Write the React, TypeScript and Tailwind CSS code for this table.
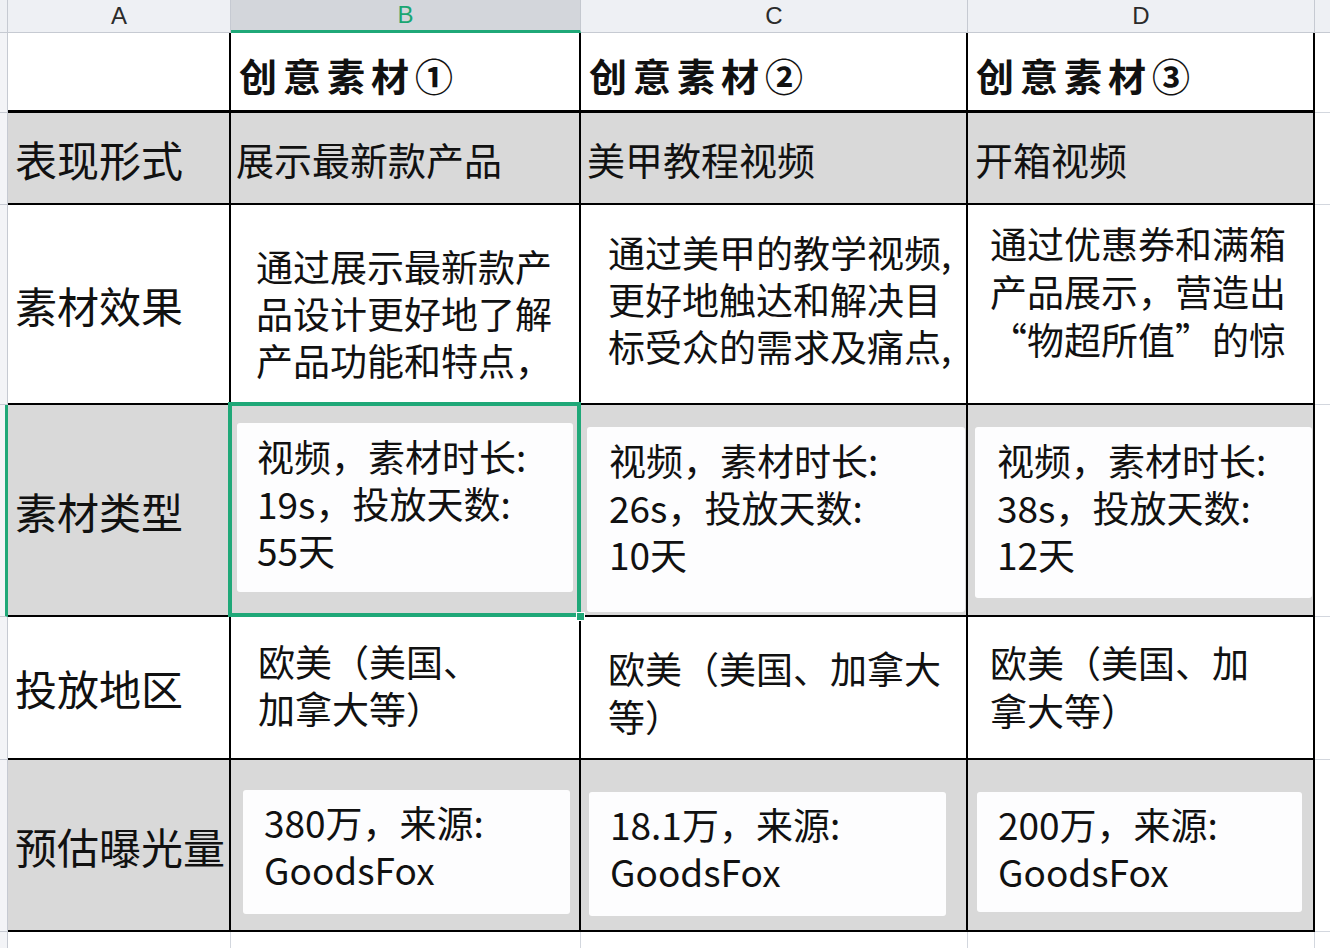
import React from 'react';

const FONT = "font-['Noto_Sans_CJK_SC','Noto_Sans',sans-serif]";

const HeadCell: React.FC<{ label?: string; active?: boolean }> = ({ label, active }) => (
  <div
    className={`flex items-center justify-center font-['Liberation_Sans','Noto_Sans',sans-serif] text-[24px] leading-[28px] border-r ${
      active
        ? 'bg-[#d3d6db] text-[#19a672] border-r-[#c4c8cf] border-b-[3px] border-b-[#1fa878]'
        : 'bg-[#eef0f4] text-[#2b2b2b] border-r-[#c6cad2] border-b border-b-[#c6cad2]'
    }`}
  >
    {label}
  </div>
);

const RowStrip: React.FC<{ active?: boolean }> = ({ active }) => (
  <div
    className={`bg-[#f3f4f7] border-b border-b-[#c6cad2] ${
      active ? 'border-r-[3px] border-r-[#1fa878]' : 'border-r border-r-[#c6cad2]'
    }`}
  />
);

const Rest: React.FC = () => <div className="bg-white border-b border-b-[#d3d7de]" />;

const Lines: React.FC<{ lines: string[]; className?: string }> = ({ lines, className }) => (
  <div className={className}>
    {lines.map((l, i) => (
      <div key={i} className="whitespace-nowrap">
        {l}
      </div>
    ))}
  </div>
);

export default function App() {
  return (
    <div className={`w-[1330px] h-[948px] overflow-hidden bg-white text-[#111] ${FONT}`}>
      <div className="grid grid-cols-[8px_223px_350px_387px_347px_1fr] grid-rows-[33px_80px_92px_200px_212px_143px_172px_16px]">
        {/* column letters */}
        <div className="bg-[#eef0f4] border-r border-b border-[#c6cad2]" />
        <HeadCell label="A" />
        <HeadCell label="B" active />
        <HeadCell label="C" />
        <HeadCell label="D" />
        <div className="bg-[#eef0f4] border-b border-b-[#c6cad2]" />

        {/* title row */}
        <div className="bg-[#f3f4f7] border-r border-b border-[#c6cad2]" />
        <div className="bg-white border-r-2 border-r-black border-b-[3px] border-b-black" />
        {['创意素材①', '创意素材②', '创意素材③'].map((t) => (
          <div
            key={t}
            className="flex items-center pl-[8px] pt-[6px] bg-white border-r-2 border-r-black border-b-[3px] border-b-black text-[38px] font-bold tracking-[6px] whitespace-nowrap"
          >
            {t}
          </div>
        ))}
        <div className="bg-white border-b border-b-[#d3d7de]" />

        {/* 表现形式 */}
        <RowStrip />
        <div className="flex items-center pl-[7px] bg-[#d9d9d9] border-r-2 border-b-2 border-black text-[42px]">表现形式</div>
        <div className="flex items-center pl-[5px] bg-[#d9d9d9] border-r-2 border-b-2 border-black text-[38px]">展示最新款产品</div>
        <div className="flex items-center pl-[6px] bg-[#d9d9d9] border-r-2 border-b-2 border-black text-[38px]">美甲教程视频</div>
        <div className="flex items-center pl-[7px] bg-[#d9d9d9] border-r-2 border-b-2 border-black text-[38px]">开箱视频</div>
        <Rest />

        {/* 素材效果 */}
        <RowStrip />
        <div className="flex items-center pl-[7px] bg-white border-r-2 border-b-2 border-black text-[42px]">素材效果</div>
        <div className="overflow-hidden bg-white border-r-2 border-b-2 border-black">
          <Lines
            className="pl-[25px] pt-[38px] text-[37px] leading-[47px]"
            lines={['通过展示最新款产', '品设计更好地了解', '产品功能和特点，']}
          />
        </div>
        <div className="overflow-hidden bg-white border-r-2 border-b-2 border-black">
          <Lines
            className="pl-[27px] pt-[24px] text-[37px] leading-[47px]"
            lines={['通过美甲的教学视频,', '更好地触达和解决目', '标受众的需求及痛点,']}
          />
        </div>
        <div className="overflow-hidden bg-white border-r-2 border-b-2 border-black">
          <Lines
            className="pl-[22px] pt-[14px] text-[37px] leading-[48px]"
            lines={['通过优惠券和满箱', '产品展示，营造出', '“物超所值”的惊']}
          />
        </div>
        <Rest />

        {/* 素材类型 */}
        <RowStrip active />
        <div className="flex items-center pl-[7px] bg-[#d9d9d9] border-r-2 border-b-2 border-black text-[42px]">素材类型</div>
        <div className="relative bg-[#d9d9d9] border-r-2 border-b-2 border-black">
          <div className="ml-[6px] mt-[18px] w-[336px] h-[169px] rounded-[3px] bg-[#fdfdfe]">
            <Lines className="pl-[20px] pt-[10px] text-[37px] leading-[47px]" lines={['视频，素材时长:', '19s，投放天数:', '55天']} />
          </div>
          <div className="absolute -left-[3px] -top-[3px] -right-[2px] -bottom-[2px] border-[4px] border-[#1fa878]" />
          <div className="absolute -right-[6px] -bottom-[6px] w-[9px] h-[9px] bg-[#1fa878] border border-white" />
        </div>
        <div className="bg-[#d9d9d9] border-r-2 border-b-2 border-black">
          <div className="ml-[6px] mt-[22px] w-[378px] h-[185px] rounded-[3px] bg-[#fdfdfe]">
            <Lines className="pl-[22px] pt-[10px] text-[37px] leading-[47px]" lines={['视频，素材时长:', '26s，投放天数:', '10天']} />
          </div>
        </div>
        <div className="bg-[#d9d9d9] border-r-2 border-b-2 border-black">
          <div className="ml-[7px] mt-[22px] w-[337px] h-[171px] rounded-[3px] bg-[#fdfdfe]">
            <Lines className="pl-[22px] pt-[10px] text-[37px] leading-[47px]" lines={['视频，素材时长:', '38s，投放天数:', '12天']} />
          </div>
        </div>
        <Rest />

        {/* 投放地区 */}
        <RowStrip />
        <div className="flex items-center pl-[7px] bg-white border-r-2 border-b-2 border-black text-[42px]">投放地区</div>
        <div className="overflow-hidden bg-white border-r-2 border-b-2 border-black">
          <Lines className="pl-[27px] pt-[21px] text-[37px] leading-[47px]" lines={['欧美（美国、', '加拿大等）']} />
        </div>
        <div className="overflow-hidden bg-white border-r-2 border-b-2 border-black">
          <Lines className="pl-[27px] pt-[27px] text-[37px] leading-[48px]" lines={['欧美（美国、加拿大', '等）']} />
        </div>
        <div className="overflow-hidden bg-white border-r-2 border-b-2 border-black">
          <Lines className="pl-[22px] pt-[21px] text-[37px] leading-[48px]" lines={['欧美（美国、加', '拿大等）']} />
        </div>
        <Rest />

        {/* 预估曝光量 */}
        <RowStrip />
        <div className="flex items-center pl-[7px] bg-[#d9d9d9] border-r-2 border-b-2 border-black text-[42px] whitespace-nowrap">预估曝光量</div>
        <div className="bg-[#d9d9d9] border-r-2 border-b-2 border-black">
          <div className="ml-[12px] mt-[30px] w-[327px] h-[124px] rounded-[3px] bg-[#fdfdfe]">
            <Lines className="pl-[21px] pt-[9px] text-[37px] leading-[47px]" lines={['380万，来源:', 'GoodsFox']} />
          </div>
        </div>
        <div className="bg-[#d9d9d9] border-r-2 border-b-2 border-black">
          <div className="ml-[8px] mt-[32px] w-[357px] h-[124px] rounded-[3px] bg-[#fdfdfe]">
            <Lines className="pl-[21px] pt-[9px] text-[37px] leading-[47px]" lines={['18.1万，来源:', 'GoodsFox']} />
          </div>
        </div>
        <div className="bg-[#d9d9d9] border-r-2 border-b-2 border-black">
          <div className="ml-[9px] mt-[32px] w-[325px] h-[120px] rounded-[3px] bg-[#fdfdfe]">
            <Lines className="pl-[21px] pt-[9px] text-[37px] leading-[47px]" lines={['200万，来源:', 'GoodsFox']} />
          </div>
        </div>
        <Rest />

        {/* trailing row */}
        <div className="bg-[#f3f4f7] border-r border-r-[#c6cad2]" />
        <div className="border-r border-r-[#d3d7de]" />
        <div className="border-r border-r-[#d3d7de]" />
        <div className="border-r border-r-[#d3d7de]" />
        <div className="border-r border-r-[#d3d7de]" />
        <div />
      </div>
    </div>
  );
}
